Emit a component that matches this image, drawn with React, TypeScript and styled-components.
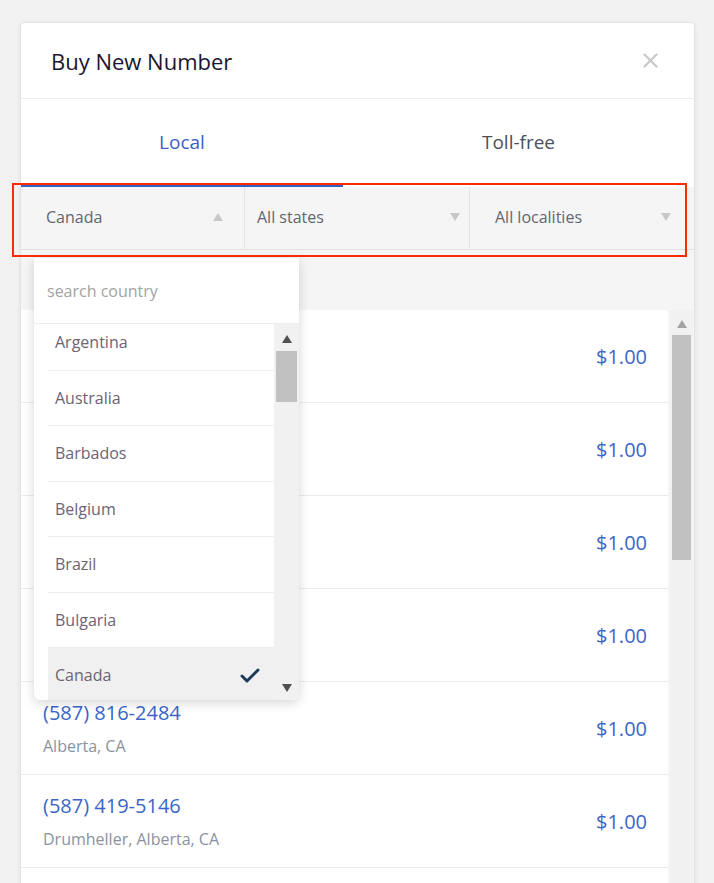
import styled, { createGlobalStyle } from "styled-components";

const GlobalStyle = createGlobalStyle`
  html, body {
    margin: 0;
    padding: 0;
    height: 100%;
    overflow: hidden;
    background: #f2f2f2;
    font-family: "Open Sans", "Noto Sans", sans-serif;
  }
  * { box-sizing: border-box; }
`;

const Page = styled.div`
  position: relative;
  padding: 22px 0 0 20px;
  height: 883px;
`;

const Card = styled.div`
  position: relative;
  width: 675px;
  height: 900px;
  background: #fff;
  border: 1px solid #e3e3e3;
  border-radius: 4px;
  box-shadow: 0 1px 4px rgba(0, 0, 0, 0.08);
  display: flex;
  flex-direction: column;
`;

const Header = styled.div`
  height: 76px;
  padding: 0 36px 0 30px;
  display: flex;
  align-items: center;
  justify-content: space-between;
  border-bottom: 1px solid #ececec;
  flex-shrink: 0;
`;

const Title = styled.h2`
  margin: 0;
  font-size: 22px;
  font-weight: 400;
  color: #1c1530;
`;

const Tabs = styled.div`
  display: flex;
  height: 88px;
  flex-shrink: 0;
`;

const Tab = styled.div<{ $active?: boolean; $width?: number }>`
  ${(p) => (p.$width ? `width: ${p.$width}px;` : "flex: 1;")}
  display: flex;
  align-items: center;
  justify-content: center;
  padding-top: 1px;
  font-size: 19px;
  color: ${(p) => (p.$active ? "#3d5ec7" : "#4a505b")};
  border-bottom: 3px solid ${(p) => (p.$active ? "#3462c4" : "transparent")};
`;

const FilterBar = styled.div`
  display: flex;
  height: 63px;
  background: #f5f5f5;
  border-bottom: 1px solid #e2e2e2;
  flex-shrink: 0;
`;

const FilterCell = styled.div<{ $width?: number; $padLeft: number; $padRight: number }>`
  ${(p) => (p.$width ? `width: ${p.$width}px;` : "flex: 1;")}
  display: flex;
  align-items: center;
  justify-content: space-between;
  padding: 0 ${(p) => p.$padRight}px 3px ${(p) => p.$padLeft}px;
  border-right: 1px solid #e4e4e4;
  font-size: 16px;
  color: #626670;
  &:last-child { border-right: none; }
`;

const Caret = styled.span<{ $up?: boolean; $color?: string; $size?: number }>`
  width: 0;
  height: 0;
  border-left: ${(p) => p.$size ?? 5}px solid transparent;
  border-right: ${(p) => p.$size ?? 5}px solid transparent;
  ${(p) =>
    p.$up
      ? `border-bottom: ${(p.$size ?? 5) + 3}px solid ${p.$color ?? "#c8c8c8"};`
      : `border-top: ${(p.$size ?? 5) + 3}px solid ${p.$color ?? "#c8c8c8"};`}
`;

const ListSection = styled.div`
  flex: 1;
  background: #f5f5f5;
  padding-top: 60px;
  display: flex;
  overflow: hidden;
`;

const Rows = styled.div`
  width: 647px;
  background: #fff;
`;

const Row = styled.div`
  height: 93px;
  display: flex;
  align-items: center;
  justify-content: space-between;
  padding: 0 21px 0 22px;
  border-bottom: 1px solid #ececec;
`;

const NumberInfo = styled.div`
  display: flex;
  flex-direction: column;
  gap: 9px;
`;

const Phone = styled.span`
  font-size: 20px;
  line-height: 26px;
  color: #3a66c9;
`;

const Location = styled.span`
  font-size: 16px;
  line-height: 22px;
  color: #8a929e;
`;

const Price = styled.span`
  font-size: 20px;
  color: #3a66c9;
`;

const Scrollbar = styled.div<{ $width: number }>`
  width: ${(p) => p.$width}px;
  background: #f1f1f1;
  display: flex;
  flex-direction: column;
  align-items: center;
  flex-shrink: 0;
`;

const MainScrollbar = styled(Scrollbar)`
  margin-left: 2px;
`;

const ScrollArrow = styled.div<{ $mt?: number; $mb?: number }>`
  height: 17px;
  width: 100%;
  margin-top: ${(p) => p.$mt ?? 0}px;
  margin-bottom: ${(p) => p.$mb ?? 0}px;
  display: flex;
  align-items: center;
  justify-content: center;
`;

const Thumb = styled.div<{ $top: number; $height: number }>`
  margin-top: ${(p) => p.$top}px;
  height: ${(p) => p.$height}px;
  width: calc(100% - 4px);
  background: #c1c1c1;
`;

const Spacer = styled.div`
  flex: 1;
`;

const Dropdown = styled.div`
  position: absolute;
  left: 13px;
  top: 235px;
  width: 265px;
  height: 442px;
  background: #fff;
  border-radius: 0 0 6px 6px;
  box-shadow: 0 3px 12px rgba(0, 0, 0, 0.16);
  display: flex;
  flex-direction: column;
  overflow: hidden;
  z-index: 2;
`;

const SearchInput = styled.input`
  height: 66px;
  flex-shrink: 0;
  border: none;
  border-bottom: 1px solid #ececec;
  padding: 0 0 0 13px;
  font-family: inherit;
  font-size: 16px;
  color: #333;
  outline: none;
  &::placeholder { color: #a3a3a3; }
`;

const DropBody = styled.div`
  flex: 1;
  display: flex;
  padding-left: 14px;
  overflow: hidden;
`;

const Options = styled.div`
  flex: 1;
  margin-top: -9px;
`;

const Option = styled.div<{ $selected?: boolean }>`
  height: 55.5px;
  display: flex;
  align-items: center;
  justify-content: space-between;
  padding: 0 14px 0 7px;
  border-bottom: 1px solid #eeeeee;
  font-size: 16px;
  color: #6e6274;
  background: ${(p) => (p.$selected ? "#f0f0f0" : "#fff")};
`;

const Annotation = styled.div`
  position: absolute;
  left: 12px;
  top: 183px;
  width: 675px;
  height: 74px;
  border: 2px solid #ff2a00;
  pointer-events: none;
  z-index: 3;
`;

const numbers = [
  { phone: "(587) 800-1190", place: "Calgary, Alberta, CA" },
  { phone: "(587) 802-3317", place: "Edmonton, Alberta, CA" },
  { phone: "(587) 805-7712", place: "Red Deer, Alberta, CA" },
  { phone: "(587) 811-0458", place: "Lethbridge, Alberta, CA" },
  { phone: "(587) 816-2484", place: "Alberta, CA" },
  { phone: "(587) 419-5146", place: "Drumheller, Alberta, CA" },
  { phone: "(587) 422-3381", place: "Airdrie, Alberta, CA" },
];

const countries = ["Argentina", "Australia", "Barbados", "Belgium", "Brazil", "Bulgaria", "Canada"];

const CloseIcon = () => (
  <svg width="15" height="15" viewBox="0 0 15 15">
    <path d="M1.5 1.5 L13.5 13.5 M13.5 1.5 L1.5 13.5" stroke="#c8c8c8" strokeWidth="2.2" strokeLinecap="round" />
  </svg>
);

const Check = () => (
  <svg width="20" height="16" viewBox="0 0 20 16">
    <path d="M2 9 L7 14 L18 3" fill="none" stroke="#1f3a58" strokeWidth="3" strokeLinecap="round" strokeLinejoin="round" />
  </svg>
);

export default function App() {
  return (
    <>
      <GlobalStyle />
      <Page>
        <Card>
          <Header>
            <Title>Buy New Number</Title>
            <CloseIcon />
          </Header>
          <Tabs>
            <Tab $active $width={322}>Local</Tab>
            <Tab>Toll-free</Tab>
          </Tabs>
          <FilterBar>
            <FilterCell $width={224} $padLeft={25} $padRight={21}>
              Canada
              <Caret $up />
            </FilterCell>
            <FilterCell $width={225} $padLeft={12} $padRight={9}>
              All states
              <Caret />
            </FilterCell>
            <FilterCell $padLeft={25} $padRight={23}>
              All localities
              <Caret />
            </FilterCell>
          </FilterBar>
          <ListSection>
            <Rows>
              {numbers.map((n) => (
                <Row key={n.phone}>
                  <NumberInfo>
                    <Phone>{n.phone}</Phone>
                    <Location>{n.place}</Location>
                  </NumberInfo>
                  <Price>$1.00</Price>
                </Row>
              ))}
            </Rows>
            <MainScrollbar $width={23}>
              <ScrollArrow $mt={5}>
                <Caret $up $size={5} $color="#a3a3a3" />
              </ScrollArrow>
              <Thumb $top={3} $height={225} />
            </MainScrollbar>
          </ListSection>

          <Dropdown>
            <SearchInput placeholder="search country" />
            <DropBody>
              <Options>
                {countries.map((c) => (
                  <Option key={c} $selected={c === "Canada"}>
                    {c}
                    {c === "Canada" && <Check />}
                  </Option>
                ))}
              </Options>
              <Scrollbar $width={25}>
                <ScrollArrow $mt={6}>
                  <Caret $up $size={5} $color="#505050" />
                </ScrollArrow>
                <Thumb $top={4} $height={51} />
                <Spacer />
                <ScrollArrow $mb={4}>
                  <Caret $size={5} $color="#505050" />
                </ScrollArrow>
              </Scrollbar>
            </DropBody>
          </Dropdown>
        </Card>
        <Annotation />
      </Page>
    </>
  );
}
